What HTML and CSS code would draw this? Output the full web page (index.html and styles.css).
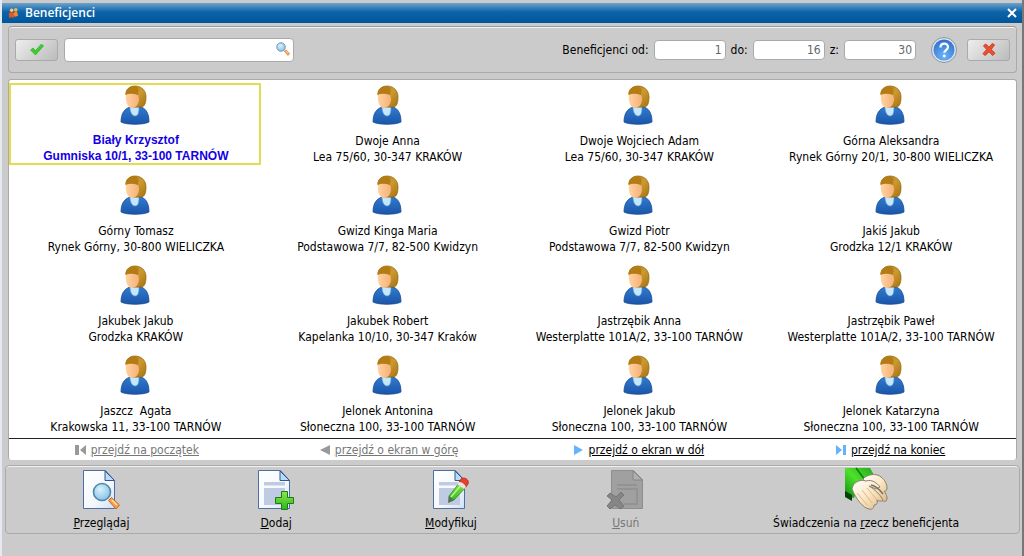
FILE: index.html
```html
<!DOCTYPE html>
<html lang="pl">
<head>
  <meta charset="UTF-8">
  <meta name="viewport" content="width=device-width, initial-scale=1.0">
  <title>Beneficjenci</title>
  <link rel="stylesheet" href="styles.css">
</head>
<body>
  <!-- Wspólne ikony -->
  <svg class="defs" aria-hidden="true">
    <defs>
      <linearGradient id="hair" x1="0" y1="0" x2="1" y2="1">
        <stop offset="0" stop-color="#a8730e"/><stop offset="0.5" stop-color="#cb9a30"/><stop offset="1" stop-color="#a87210"/>
      </linearGradient>
      <linearGradient id="skin" x1="0" y1="0" x2="1" y2="0">
        <stop offset="0" stop-color="#ffd3a0"/><stop offset="1" stop-color="#f6b078"/>
      </linearGradient>
      <linearGradient id="shirt" x1="0" y1="0" x2="0" y2="1">
        <stop offset="0" stop-color="#2f7bd0"/><stop offset="1" stop-color="#1b55a8"/>
      </linearGradient>
      <linearGradient id="paper" x1="0" y1="0" x2="1" y2="1">
        <stop offset="0" stop-color="#ffffff"/><stop offset="0.6" stop-color="#f4f8fe"/><stop offset="1" stop-color="#cfe0f7"/>
      </linearGradient>
      <radialGradient id="lens" cx="0.4" cy="0.35" r="0.7">
        <stop offset="0" stop-color="#d8f2fb"/><stop offset="1" stop-color="#84c0e4"/>
      </radialGradient>
      <linearGradient id="green" x1="0" y1="0" x2="0" y2="1">
        <stop offset="0" stop-color="#8ce84c"/><stop offset="1" stop-color="#2eb41c"/>
      </linearGradient>
      <linearGradient id="sleeve" x1="0" y1="1" x2="1" y2="0">
        <stop offset="0" stop-color="#0c8a0c"/><stop offset="0.5" stop-color="#4fe02c"/><stop offset="1" stop-color="#22aa18"/>
      </linearGradient>
      <linearGradient id="hand" x1="0" y1="0" x2="1" y2="1">
        <stop offset="0" stop-color="#ffffff"/><stop offset="0.5" stop-color="#fbe8c6"/><stop offset="1" stop-color="#dcb884"/>
      </linearGradient>
      <radialGradient id="ball" cx="0.5" cy="0.8" r="0.8">
        <stop offset="0" stop-color="#6cb4f6"/><stop offset="1" stop-color="#2f6fcf"/>
      </radialGradient>
    </defs>
    <symbol id="person" viewBox="0 0 30 40">
      <path d="M1 37C1 29 4 24 10 22h11c6 2 8 8 8 15-5 3-23 3-28 0z" fill="url(#shirt)" stroke="#174c96" stroke-width="0.8"/>
      <path d="M10 22h9c0 6-1 9-4 9s-5-4-5-9z" fill="#c6e6fa" stroke="#5b9bd8" stroke-width="0.6"/>
      <path d="M6 9C6 4 10 1 15 1c7 0 11 5 11 11 0 5-1 10-5 10h-8z" fill="url(#hair)" stroke="#946208" stroke-width="0.7"/>
      <path d="M6 8h11c1 2 2 4 2 6 0 5-3 9-7 9-5 0-7-7-6-15z" fill="url(#skin)"/>
      <path d="M5.500 10C5 5 9 1 15 1c3 1 4 4 3 9-4-1-8-2-12.500 0z" fill="#b47c14"/>
    </symbol>
    <symbol id="doc" viewBox="0 0 40 42">
      <path d="M2.500 1.500h22l9 10v28h-31z" fill="url(#paper)" stroke="#4d6fa5"/>
      <path d="M24 2v9.500h9.500z" fill="#b8dcf8" stroke="#35578f"/>
    </symbol>
    <symbol id="doc-text" viewBox="0 0 40 42">
      <use href="#doc"/>
      <path d="M8 13h21v3.500H8zM8 19h21v17H8z" fill="#bfcbe3"/>
    </symbol>
    <symbol id="magnifier" viewBox="0 0 28 28">
      <path d="M16.500 18.500l3-3 8 7.500-3.500 4z" fill="#f6a04c" stroke="#c96a1c"/>
      <path d="M20 18l5 5" stroke="#ffe0b4" stroke-width="1.500"/>
      <circle cx="10" cy="10" r="8.500" fill="url(#lens)" stroke="#5586a8" stroke-width="1.600"/>
    </symbol>
  </svg>

  <header class="titlebar">
    <svg class="app-icon" viewBox="0 0 12 12" aria-hidden="true">
      <circle cx="4" cy="3" r="2" fill="#ffc56e"/><path d="M1 11V6l3-1 3 1v5z" fill="#e0562a"/>
      <circle cx="8.500" cy="2.500" r="2" fill="#f2b24e"/><path d="M6 8l1-3h3l1 4-3 1z" fill="#f08a32"/>
    </svg>
    <h1>Beneficjenci</h1>
    <button class="close" type="button" aria-label="Zamknij okno">
      <svg viewBox="0 0 10 10"><path d="M1 1l8 8M9 1l-8 8" stroke="#fff" stroke-width="2"/></svg>
    </button>
  </header>

  <form class="toolbar">
    <button class="small-button" type="button" aria-label="Zatwierdź">
      <svg viewBox="0 0 14 12"><path d="M0.500 6.500l2.500-2 2.500 2.500L11.500 0.500l2 2L5.500 11.500z" fill="#3ecb30" stroke="#2ba722" stroke-width="0.6"/></svg>
    </button>
    <div class="search">
      <input type="text" aria-label="Szukaj">
      <svg aria-hidden="true"><use href="#magnifier"/></svg>
    </div>
    <div class="range">
      <label for="from">Beneficjenci od:</label>
      <input type="text" id="from" value="1" readonly>
      <label for="to">do:</label>
      <input type="text" id="to" value="16" readonly>
      <label for="total">z:</label>
      <input type="text" id="total" value="30" readonly>
    </div>
    <button class="help" type="button" aria-label="Pomoc">
      <svg viewBox="0 0 26 26">
        <circle cx="13" cy="13" r="12.500" fill="#dde3ea" stroke="#8b97a8"/>
        <circle cx="13" cy="13" r="10.500" fill="url(#ball)"/>
        <path d="M9.500 10.500c0-5 7.500-5 7.500-0.500 0 3-3.700 3-3.700 5.800" fill="none" stroke="#fff" stroke-width="2.200"/>
        <circle cx="13.300" cy="19" r="1.400" fill="#fff"/>
      </svg>
    </button>
    <button class="small-button" type="button" aria-label="Anuluj">
      <svg viewBox="0 0 14 14"><path d="M3.500 1L7 4.500 10.500 0.500l2.500 1.500-3.500 5 4 4-2.500 2.500L7 9.500l-4 4L0.500 11.500l4-4.500L1 3z" fill="#ee4f2c" stroke="#c02814" stroke-width="0.8"/></svg>
    </button>
  </form>

  <main class="list">
    <ul class="people">
      <li class="selected"><svg><use href="#person"/></svg><p>Biały Krzysztof<br>Gumniska 10/1, 33-100 TARNÓW</p></li>
      <li><svg><use href="#person"/></svg><p>Dwoje Anna<br>Lea 75/60, 30-347 KRAKÓW</p></li>
      <li><svg><use href="#person"/></svg><p>Dwoje Wojciech Adam<br>Lea 75/60, 30-347 KRAKÓW</p></li>
      <li><svg><use href="#person"/></svg><p>Górna Aleksandra<br>Rynek Górny 20/1, 30-800 WIELICZKA</p></li>
      <li><svg><use href="#person"/></svg><p>Górny Tomasz<br>Rynek Górny, 30-800 WIELICZKA</p></li>
      <li><svg><use href="#person"/></svg><p>Gwizd Kinga Maria<br>Podstawowa 7/7, 82-500 Kwidzyn</p></li>
      <li><svg><use href="#person"/></svg><p>Gwizd Piotr<br>Podstawowa 7/7, 82-500 Kwidzyn</p></li>
      <li><svg><use href="#person"/></svg><p>Jakiś Jakub<br>Grodzka 12/1 KRAKÓW</p></li>
      <li><svg><use href="#person"/></svg><p>Jakubek Jakub<br>Grodzka KRAKÓW</p></li>
      <li><svg><use href="#person"/></svg><p>Jakubek Robert<br>Kapelanka 10/10, 30-347 Kraków</p></li>
      <li><svg><use href="#person"/></svg><p>Jastrzębik Anna<br>Westerplatte 101A/2, 33-100 TARNÓW</p></li>
      <li><svg><use href="#person"/></svg><p>Jastrzębik Paweł<br>Westerplatte 101A/2, 33-100 TARNÓW</p></li>
      <li><svg><use href="#person"/></svg><p>Jaszcz&nbsp; Agata<br>Krakowska 11, 33-100 TARNÓW</p></li>
      <li><svg><use href="#person"/></svg><p>Jelonek Antonina<br>Słoneczna 100, 33-100 TARNÓW</p></li>
      <li><svg><use href="#person"/></svg><p>Jelonek Jakub<br>Słoneczna 100, 33-100 TARNÓW</p></li>
      <li><svg><use href="#person"/></svg><p>Jelonek Katarzyna<br>Słoneczna 100, 33-100 TARNÓW</p></li>
    </ul>
    <nav class="pager">
      <a class="off" href="#"><svg viewBox="0 0 12 12"><path d="M0 1h4v10H0zM11 1v10L5 6z" fill="#999"/></svg><span>przejdź na początek</span></a>
      <a class="off" href="#"><svg viewBox="0 0 12 12"><path d="M11 1v10L1 6z" fill="#999"/></svg><span>przejdź o ekran w górę</span></a>
      <a href="#"><svg viewBox="0 0 12 12"><path d="M1 1v10l9-5z" fill="#66b3fa"/></svg><span>przejdź o ekran w dół</span></a>
      <a href="#"><svg viewBox="0 0 12 12"><path d="M1 1v10l6-5zM8 1h3v10H8z" fill="#66b3fa"/></svg><span>przejdź na koniec</span></a>
    </nav>
  </main>

  <footer class="actions">
    <button type="button">
      <svg viewBox="0 0 40 42"><use href="#doc"/><use href="#magnifier" x="11" y="13" width="28" height="28"/></svg>
      <span><u>P</u>rzeglądaj</span>
    </button>
    <button type="button">
      <svg viewBox="0 0 40 42"><use href="#doc-text"/><path d="M25.500 22.500h6v6h6v6h-6v6h-6v-6h-6v-6h6z" fill="url(#green)" stroke="#1d7d14"/></svg>
      <span><u>D</u>odaj</span>
    </button>
    <button type="button">
      <svg viewBox="0 0 40 42"><use href="#doc-text"/>
        <path d="M18 27l11-14 6 5-12 13-5 2z" fill="url(#green)" stroke="#2c8f1c" stroke-width="0.8"/>
        <path d="M20 28l11-13" stroke="#b6f58c" stroke-width="1.500"/>
        <path d="M18 27l5 4-6 3z" fill="#56705a"/>
        <path d="M28 13l2-3c3-3 9 1 7 5l-2 3c-1-3-4-5-7-5z" fill="#e8402c" stroke="#b52a1c" stroke-width="0.8"/>
        <path d="M28 13c3 0 6 2 7 5l-2 2-7-5z" fill="#f2e2dc"/>
      </svg>
      <span><u>M</u>odyfikuj</span>
    </button>
    <button type="button" disabled>
      <svg viewBox="0 0 40 42">
        <path d="M5.500 1.500h22l9 9v29h-31z" fill="#a0a0a0" stroke="#8e8e8e"/>
        <path d="M27 2v9h9.500z" fill="#b0b0b0" stroke="#878787"/>
        <path d="M11 16h20M11 20h20v15H18" fill="none" stroke="#939393" stroke-width="2"/>
        <path d="M4 24l6 4 5-5 3 3-5 5 5 6-3 3-6-4-5 4-3-3 5-6-5-4z" fill="#858585" stroke="#767676"/>
      </svg>
      <span><u>U</u>suń</span>
    </button>
    <button type="button">
      <svg class="wide" viewBox="0 0 44 44">
        <path d="M1 1h25l4 7-13 5-7 18-5-1-4-4z" fill="url(#sleeve)"/>
        <path d="M1 24l7 4v6l-7-4z" fill="#063f08"/>
        <path d="M12 1l9 12" stroke="#0d7d0c" stroke-width="1.500"/>
        <path d="M19 12c4-5 14-6 18-2 4 3 6 7 6 11 0 3-2 4-3 3 3 4 4 8 2 10-3 2-7-3-10-7z" fill="url(#hand)" stroke="#8a8270"/>
        <path d="M8 22c1-7 8-10 14-8 6-2 11 2 14 6l-4 2-7-3c5 3 11 8 14 14-2 2-4 1-6 0 1 3 0 5-3 5 0 3-2 5-5 4-6-1-13-10-17-20z" fill="url(#hand)" stroke="#8a8270"/>
        <path d="M13 26l10 12M18 23l10 13M23 21l10 12" fill="none" stroke="#dcb98a"/>
        <path d="M27 18c5 1 9 5 12 9" fill="none" stroke="#77705f" stroke-width="1.500"/>
      </svg>
      <span>Świadczenia na <u>r</u>zecz beneficjenta</span>
    </button>
  </footer>
</body>
</html>
```
FILE: styles.css
```css
* {
  box-sizing: border-box;
}

body {
  margin: 0;
  min-height: 100vh;
  padding: 3px 2px 0;
  background-color: #cbcbcb;
  border-right: 2px solid #777;
  border-left: 2px solid #e4eaf0;
  font-family: "DejaVu Sans Condensed", Tahoma, "DejaVu Sans", sans-serif;
  font-size: 12px;
  line-height: 16px;
  color: #000;
}

button,
input {
  font: inherit;
  color: inherit;
}

button {
  padding: 0;
  border: none;
  background: none;
  cursor: pointer;
}

svg {
  display: block;
  flex: none;
}

.defs {
  position: absolute;
  width: 0;
  height: 0;
}

/* Pasek tytułu */
.titlebar {
  display: flex;
  align-items: center;
  gap: 6px;
  height: 20px;
  margin: 0 -2px;
  padding: 0 5px 0 6px;
  background: linear-gradient(#6ba3cc, #0b63a8 45%, #00569b);
}

.app-icon {
  width: 11px;
  height: 12px;
}

h1 {
  flex: 1;
  margin: 0;
  font-family: "Open Sans", sans-serif;
  font-size: 12px;
  font-weight: 600;
  color: #fff;
}

.close svg {
  width: 10px;
  height: 10px;
}

/* Górny panel */
.toolbar {
  display: flex;
  align-items: center;
  height: 47px;
  margin: 3px 3px 6px 4px;
  padding: 0 6px;
  border: 1px solid #aaa;
  border-top-color: #999;
  border-radius: 4px;
  box-shadow: inset 0 1px #f4f4f4;
}

.small-button {
  display: flex;
  align-items: center;
  justify-content: center;
  width: 43px;
  height: 22px;
  border: 1px solid #aaa;
  border-radius: 3px;
  background: linear-gradient(135deg, #eee, #bbb);
}

.small-button svg {
  width: 14px;
  height: 13px;
}

.toolbar input {
  border: 1px solid #aaa;
  border-radius: 4px;
  background-color: #fff;
  outline: none;
}

.search {
  position: relative;
  width: 230px;
  margin-left: 6px;
}

.search input {
  display: block;
  width: 100%;
  height: 24px;
  padding: 0 24px 0 6px;
}

.search svg {
  position: absolute;
  top: 4px;
  right: 4px;
  width: 14px;
  height: 14px;
}

.range {
  display: flex;
  align-items: center;
  gap: 5px;
  margin-left: auto;
}

.range input {
  width: 72px;
  height: 20px;
  padding: 0 3px;
  color: #666;
  text-align: right;
}

.help {
  margin: 0 10px 0 15px;
}

.help svg {
  width: 26px;
  height: 26px;
}

/* Lista beneficjentów */
.list {
  margin: 0 3px 0 4px;
  padding: 3px 0 0;
  border: 1px solid #aaa;
  border-bottom: none;
  border-radius: 3px;
  background-color: #fff;
}

.people {
  display: grid;
  grid-template-columns: repeat(4, 1fr);
  row-gap: 8px;
  margin: 0;
  padding: 0 0 3px;
  list-style: none;
  text-align: center;
}

.people li {
  display: flex;
  flex-direction: column;
  align-items: center;
  gap: 8px;
  height: 82px;
  padding-top: 2px;
}

.people svg {
  width: 30px;
  height: 40px;
}

.people p {
  margin: 0;
  padding-left: 2px;
}

.people .selected {
  gap: 7px;
  outline: 2px solid #e6dc50;
  outline-offset: -2px;
  font-family: "Liberation Sans", Arial, sans-serif;
  font-weight: bold;
  color: #1400e6;
}

/* Przechodzenie między ekranami */
.pager {
  display: grid;
  grid-template-columns: repeat(4, 1fr);
  border-top: 1px solid #222;
  padding: 3px 0 2px;
}

.pager a {
  display: flex;
  align-items: center;
  justify-content: center;
  gap: 4px;
  color: #000;
  text-decoration: none;
}

.pager span {
  text-decoration: underline;
}

.pager .off {
  padding-left: 4px;
  color: #777;
}

.pager svg {
  width: 12px;
  height: 12px;
}

/* Dolny panel z akcjami */
.actions {
  display: grid;
  grid-template-columns: repeat(4, 4fr) 7fr;
  height: 69px;
  margin: 5px 0 0 1px;
  padding: 0 0 0 8px;
  border: 1px solid #aaa;
  border-radius: 4px;
  box-shadow: inset 0 1px #f0f0f0;
}

.actions button {
  display: flex;
  flex-direction: column;
  align-items: center;
  justify-content: flex-end;
  gap: 4px;
  padding-bottom: 2px;
}

.actions button:disabled {
  color: #777;
}

.actions svg {
  width: 40px;
  height: 42px;
}

.actions .wide {
  width: 44px;
  height: 44px;
}
```
